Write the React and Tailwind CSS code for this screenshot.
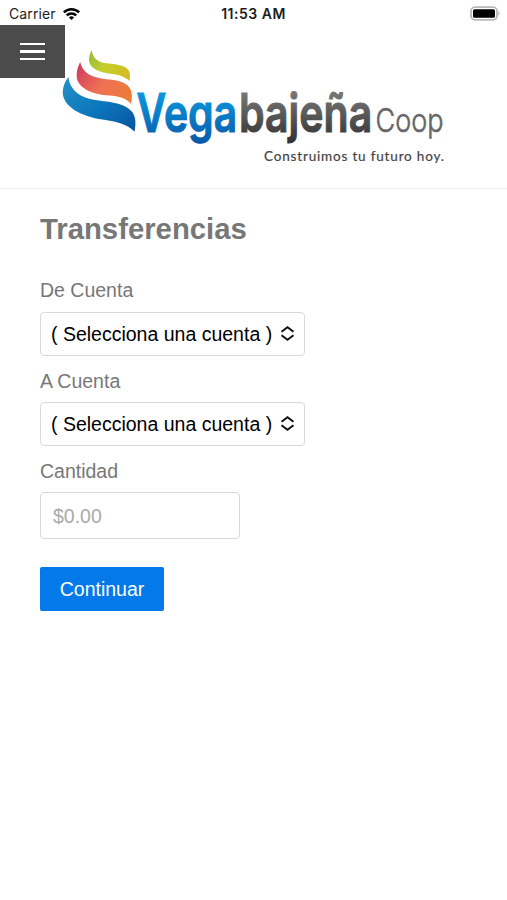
function StatusBar() {
  return (
    <div className="flex h-[25px] items-center justify-between pt-[2px] pl-[9px] pr-[7px] font-['Inter',sans-serif] leading-none text-[#1c1c1c]">
      <div className="flex w-[204px] items-center gap-[6px]">
        <span className="text-[14px] tracking-[0.1px]">Carrier</span>
        <svg width="19" height="14" viewBox="0 0 20 15" fill="none" stroke="#000" strokeWidth="2.6">
          <path d="M1.8 5.8a11.6 11.6 0 0 1 16.4 0" />
          <path d="M4.9 9a7.2 7.2 0 0 1 10.2 0" />
          <path d="M10 14 7.2 11.2a4 4 0 0 1 5.6 0Z" fill="#000" stroke="none" />
        </svg>
      </div>
      <span className="-ml-[2px] text-[14px] font-semibold tracking-[0.5px] whitespace-nowrap">11:53 AM</span>
      <div className="flex w-[204px] justify-end">
        <svg width="30" height="16" viewBox="0 0 30 16">
          <rect x="1" y="1.2" width="26" height="12.6" rx="4" fill="#fff" stroke="#b9b9b9" strokeWidth="1.8" />
          <rect x="3" y="3.2" width="22" height="8.600" rx="1.5" fill="#000" />
          <path d="M28.3 5.4c1.800.5 1.800 3.700 0 4.200z" fill="#b5b5b5" />
        </svg>
      </div>
    </div>
  );
}

function Logo() {
  return (
    <svg className="-ml-[5px] mt-[15px] shrink-0" width="400" height="130" viewBox="60 40 400 130">
      <defs>
        <linearGradient id="green" x1="0" y1="0" x2="1" y2="0.6">
          <stop offset="0" stopColor="#8fb93a" />
          <stop offset="0.5" stopColor="#c3cf2c" />
          <stop offset="1" stopColor="#d3bf22" />
        </linearGradient>
        <linearGradient id="red" x1="0" y1="0.2" x2="1" y2="0.8">
          <stop offset="0" stopColor="#d63f5e" />
          <stop offset="0.5" stopColor="#ee7254" />
          <stop offset="1" stopColor="#ee7b37" />
        </linearGradient>
        <linearGradient id="blue" x1="0" y1="0" x2="1" y2="1">
          <stop offset="0" stopColor="#2492c4" />
          <stop offset="0.5" stopColor="#0c78bd" />
          <stop offset="1" stopColor="#0755a0" />
        </linearGradient>
        <linearGradient id="vega" gradientUnits="userSpaceOnUse" x1="0" y1="-40" x2="0" y2="12">
          <stop offset="0" stopColor="#0b9ae0" />
          <stop offset="1" stopColor="#0758a8" />
        </linearGradient>
        <linearGradient id="gray" gradientUnits="userSpaceOnUse" x1="0" y1="-40" x2="0" y2="12">
          <stop offset="0" stopColor="#777" />
          <stop offset="1" stopColor="#303030" />
        </linearGradient>
      </defs>
      <path d="M91.700 50C92.500 58 98 62.300 106 63.200C115 64 122.500 65 127 68.500C130.500 71.500 130.300 76 129.700 81C124 76 118 74.500 110 73.700C100 72.500 90 68.500 89 61C88.700 57 90 53 91.700 50Z" fill="url(#green)" />
      <path d="M80.200 62C82 71 89 76 99 78C109 80 118 79.500 125 83.500C133 88.500 132.500 96 131 104C126 98 119 96.300 109 95.600C94 94.500 78 89 76.700 77C76.300 71 78 66 80.200 62Z" fill="url(#red)" />
      <path d="M68.400 77C69.500 88 77 95.500 89 98.800C102 102 116 101 127 107.500C136 113 136.500 121 134.500 131.800C127 124 116 121.300 104 119.800C87 117.500 65 110 62.800 94C62.500 87 65 81.500 68.400 77Z" fill="url(#blue)" />
      <g fontFamily="Inter, sans-serif">
        <text transform="translate(136.500 132) scale(0.74 1)" fontSize="53" fontWeight="600" textLength="136" lengthAdjust="spacingAndGlyphs" fill="url(#vega)" stroke="url(#vega)" strokeWidth="1.100">Vega</text>
        <text transform="translate(239 132) scale(0.77 1)" fontSize="53" fontWeight="600" textLength="173" lengthAdjust="spacingAndGlyphs" fill="url(#gray)" stroke="url(#gray)" strokeWidth="1.100">bajeña</text>
        <text transform="translate(375.500 132) scale(0.8 1)" fontSize="33" fontWeight="300" textLength="85" lengthAdjust="spacingAndGlyphs" fill="#666" stroke="#666" strokeWidth="0.600">Coop</text>
      </g>
      <text x="264" y="161" fontFamily="Lato, sans-serif" fontSize="13.500" fontWeight="400" textLength="180" fill="#444" stroke="#444" strokeWidth="0.200">Construimos tu futuro hoy.</text>
    </svg>
  );
}

function Select({ children }) {
  return (
    <button className="flex h-[44px] w-[265px] items-center justify-between rounded-[4px] border-[1.5px] border-[#d9d9d9] bg-white pt-[1px] pr-[9px] pl-[10px] text-[19.500px] text-black">
      <span className="whitespace-nowrap">{children}</span>
      <svg width="15" height="17" viewBox="0 0 15 17" fill="none" stroke="#111" strokeWidth="2" className="-mt-[2px]">
        <path d="M1.500 6.800 7.500 2.300l6 4.500M1.500 10.200l6 4.500 6-4.500" />
      </svg>
    </button>
  );
}

export default function App() {
  return (
    <div className="h-[900px] w-[507px] overflow-hidden bg-white font-['Liberation_Sans',Arial,sans-serif] text-[#777]">
      <StatusBar />
      <header className="flex h-[164px] items-start border-b border-[#f0f0f0]">
        <button aria-label="Menú" className="flex h-[53px] w-[65px] shrink-0 flex-col items-center justify-center gap-[5px] bg-[#4b4b4b]">
          <span className="h-[2.500px] w-[25px] bg-white" />
          <span className="h-[2.500px] w-[25px] bg-white" />
          <span className="h-[2.500px] w-[25px] bg-white" />
        </button>
        <Logo />
      </header>
      <main className="flex flex-col items-start pt-[23px] pl-[40px]">
        <h1 className="text-[29.300px] leading-[34px] font-bold">Transferencias</h1>
        <label className="mt-[32px] text-[19.500px] leading-[24px]">De Cuenta</label>
        <div className="mt-[10px]"><Select>( Selecciona una cuenta )</Select></div>
        <label className="mt-[13px] text-[19.500px] leading-[24px]">A Cuenta</label>
        <div className="mt-[9px]"><Select>( Selecciona una cuenta )</Select></div>
        <label className="mt-[13px] text-[19.500px] leading-[24px]">Cantidad</label>
        <input placeholder="$0.00" className="mt-[9px] h-[47px] w-[200px] rounded-[4px] border-[1.5px] border-[#d9d9d9] px-[12px] pt-[1px] text-[19.500px] placeholder:text-[#aaa]" />
        <button className="mt-[28px] h-[44px] w-[124px] rounded-[2px] bg-[#0479ea] pt-[2px] text-[19.500px] text-white">Continuar</button>
      </main>
    </div>
  );
}
